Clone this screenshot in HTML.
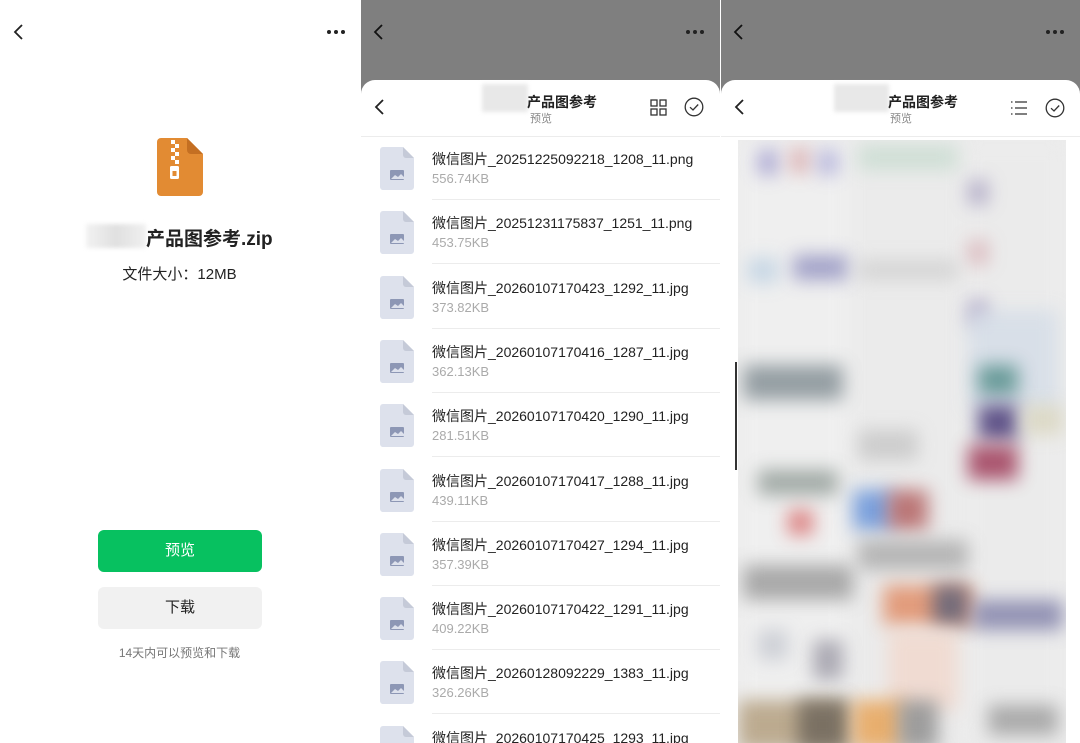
<!DOCTYPE html>
<html><head><meta charset="utf-8"><style>
*{margin:0;padding:0;box-sizing:border-box}
body{width:1080px;height:743px;overflow:hidden;background:#fff;font-family:"Liberation Sans","Noto Sans CJK SC",sans-serif;position:relative}
.p{position:absolute;top:0;height:743px;width:359px;overflow:hidden}
.abs{position:absolute}
.dots{position:absolute;top:30px;display:flex;gap:3px}
.dots i{width:4px;height:4px;border-radius:50%;background:#222;display:block}
.sheet{position:absolute;left:0;top:80px;width:359px;height:700px;background:#fff;border-radius:14px 14px 0 0}
.row{position:absolute;left:0;width:359px;height:64px}
.row .ic{position:absolute;left:19px;top:11px;width:34px;height:43px}
.row .n{position:absolute;left:71px;top:13px;font-size:14px;color:#222}
.row .s{position:absolute;left:71px;top:35px;font-size:13px;color:#aaa}
.row .ln{position:absolute;left:71px;right:0;bottom:0;height:1px;background:#ececec}
.blurbox{position:absolute;left:17px;top:140px;width:328px;height:603px;background:#ebebeb;overflow:hidden}
.bl{position:absolute;filter:blur(9px);opacity:.8}
</style></head><body>

<div class="p" style="left:0;background:#fff">
 <svg class="abs" style="left:12px;top:23px" width="14" height="18" viewBox="0 0 14 18"><path d="M10 2 L3 9 L10 16" stroke="#222" stroke-width="1.8" fill="none"/></svg>
 <div class="dots" style="left:327px"><i></i><i></i><i></i></div>
 <svg class="abs" style="left:157px;top:138px" width="46" height="58" viewBox="0 0 46 58">
  <path d="M4 0 H30 L46 16 V54 a4 4 0 0 1 -4 4 H4 a4 4 0 0 1 -4 -4 V4 a4 4 0 0 1 4 -4z" fill="#e28b33"/>
  <path d="M30 0 L46 16 H34 a4 4 0 0 1 -4 -4z" fill="#c46f22"/>
  <g fill="#fff"><rect x="14" y="2" width="4" height="4"/><rect x="18" y="6" width="4" height="4"/><rect x="14" y="10" width="4" height="4"/><rect x="18" y="14" width="4" height="4"/><rect x="14" y="18" width="4" height="4"/><rect x="18" y="22" width="4" height="4"/></g>
  <rect x="13" y="28" width="9" height="13" rx="1.5" fill="#fff"/><rect x="15.5" y="33" width="4" height="5" fill="#e28b33"/>
 </svg>
 <div class="abs" style="left:86px;top:224px;width:60px;height:24px;background:linear-gradient(90deg,#f2f2f2,#e0e0e0,#f0f0f0);filter:blur(2px)"></div>
 <div class="abs" style="left:146px;top:224px;font-size:19px;color:#222;font-weight:600">产品图参考.zip</div>
 <div class="abs" style="left:0;width:359px;text-align:center;top:263px;font-size:15px;color:#222">文件大小：12MB</div>
 <div class="abs" style="left:98px;top:530px;width:164px;height:42px;background:#07c160;border-radius:6px;color:#fff;font-size:15px;text-align:center;line-height:42px">预览</div>
 <div class="abs" style="left:98px;top:587px;width:164px;height:42px;background:#f1f1f1;border-radius:6px;color:#222;font-size:15px;text-align:center;line-height:42px">下载</div>
 <div class="abs" style="left:0;width:359px;text-align:center;top:644px;font-size:12px;color:#777">14天内可以预览和下载</div>
</div>

<div class="p" style="left:361px;background:#7f7f7f">
 <svg class="abs" style="left:11px;top:23px" width="14" height="18" viewBox="0 0 14 18"><path d="M10 2 L3 9 L10 16" stroke="#111" stroke-width="1.8" fill="none"/></svg>
 <div class="dots" style="left:325px"><i></i><i></i><i></i></div>
 <div class="sheet">
  <svg class="abs" style="left:12px;top:18px" width="14" height="18" viewBox="0 0 14 18"><path d="M10 2 L3 9 L10 16" stroke="#222" stroke-width="1.8" fill="none"/></svg>
  <div class="abs" style="left:121px;top:4px;width:46px;height:28px;background:#e8e8e8;filter:blur(2px)"></div>
  <div class="abs" style="left:166px;top:12px;font-size:14px;color:#222;font-weight:bold">产品图参考</div>
  <div class="abs" style="left:169px;top:30px;font-size:11px;color:#888">预览</div>
  <svg class="abs" style="left:289px;top:19px" width="17" height="17" viewBox="0 0 17 17" fill="none" stroke="#333" stroke-width="1.3"><rect x="1" y="1" width="6" height="6"/><rect x="10" y="1" width="6" height="6"/><rect x="1" y="10" width="6" height="6"/><rect x="10" y="10" width="6" height="6"/></svg>
  <svg class="abs" style="left:323px;top:17px" width="20" height="20" viewBox="0 0 20 20" fill="none" stroke="#333" stroke-width="1.3"><circle cx="10" cy="10" r="8.8"/><path d="M6 10.2 L9 13 L14.2 7.5"/></svg>
  <div class="abs" style="left:0;right:0;top:56px;height:1px;background:#ececec"></div>
 </div>
</div>
<div id="list" class="abs" style="left:361px;top:136px;width:359px;height:607px;overflow:hidden"></div>

<div class="p" style="left:721px;background:#7f7f7f">
 <svg class="abs" style="left:11px;top:23px" width="14" height="18" viewBox="0 0 14 18"><path d="M10 2 L3 9 L10 16" stroke="#111" stroke-width="1.8" fill="none"/></svg>
 <div class="dots" style="left:325px"><i></i><i></i><i></i></div>
 <div class="sheet">
  <svg class="abs" style="left:12px;top:18px" width="14" height="18" viewBox="0 0 14 18"><path d="M10 2 L3 9 L10 16" stroke="#222" stroke-width="1.8" fill="none"/></svg>
  <div class="abs" style="left:113px;top:4px;width:55px;height:28px;background:#e8e8e8;filter:blur(2px)"></div>
  <div class="abs" style="left:167px;top:12px;font-size:14px;color:#222;font-weight:bold">产品图参考</div>
  <div class="abs" style="left:169px;top:30px;font-size:11px;color:#888">预览</div>
  <svg class="abs" style="left:289px;top:20px" width="18" height="16" viewBox="0 0 18 16" fill="none" stroke="#333" stroke-width="1.3"><path d="M1 2h1.5M1 8h1.5M1 14h1.5M5 2h12M5 8h12M5 14h12"/></svg>
  <svg class="abs" style="left:324px;top:18px" width="20" height="20" viewBox="0 0 20 20" fill="none" stroke="#333" stroke-width="1.3"><circle cx="10" cy="10" r="8.8"/><path d="M6 10.2 L9 13 L14.2 7.5"/></svg>
  <div class="abs" style="left:0;right:0;top:56px;height:1px;background:#ececec"></div>
 </div>
 <div class="abs" style="left:0;top:137px;width:359px;height:606px;background:#fff"></div>
 <div class="blurbox">
  <div class="bl" style="left:0;top:0;width:110px;height:600px;background:#f1f1f1"></div>
  <div class="bl" style="left:225px;top:0;width:103px;height:600px;background:#ececec"></div>
  <div class="bl" style="left:20px;top:10px;width:20px;height:25px;background:#9c97cc"></div>
  <div class="bl" style="left:52px;top:8px;width:20px;height:25px;background:#d8a5a8"></div>
  <div class="bl" style="left:80px;top:10px;width:20px;height:25px;background:#a9a8d8"></div>
  <div class="bl" style="left:120px;top:5px;width:100px;height:25px;background:#c8dcd0"></div>
  <div class="bl" style="left:230px;top:40px;width:20px;height:25px;background:#a7a0c0"></div>
  <div class="bl" style="left:230px;top:100px;width:20px;height:25px;background:#d8b0b5"></div>
  <div class="bl" style="left:230px;top:160px;width:20px;height:25px;background:#a59cc0"></div>
  <div class="bl" style="left:10px;top:118px;width:30px;height:25px;background:#bcd0e2"></div>
  <div class="bl" style="left:55px;top:115px;width:55px;height:25px;background:#8f8fbf"></div>
  <div class="bl" style="left:120px;top:120px;width:100px;height:20px;background:#cfcfcf"></div>
  <div class="bl" style="left:230px;top:170px;width:90px;height:100px;background:#d4dde8"></div>
  <div class="bl" style="left:5px;top:225px;width:100px;height:35px;background:#7e8a90"></div>
  <div class="bl" style="left:240px;top:225px;width:40px;height:30px;background:#4e8a86"></div>
  <div class="bl" style="left:240px;top:265px;width:40px;height:35px;background:#3d2e70"></div>
  <div class="bl" style="left:230px;top:305px;width:50px;height:35px;background:#9a3050"></div>
  <div class="bl" style="left:285px;top:265px;width:40px;height:30px;background:#d9d5bd"></div>
  <div class="bl" style="left:120px;top:290px;width:60px;height:30px;background:#c5c5c5"></div>
  <div class="bl" style="left:20px;top:330px;width:80px;height:25px;background:#8e9994"></div>
  <div class="bl" style="left:115px;top:350px;width:40px;height:40px;background:#5f8ed9"></div>
  <div class="bl" style="left:150px;top:350px;width:40px;height:40px;background:#b05a5a"></div>
  <div class="bl" style="left:50px;top:370px;width:25px;height:25px;background:#d86868"></div>
  <div class="bl" style="left:5px;top:425px;width:110px;height:35px;background:#979797"></div>
  <div class="bl" style="left:120px;top:400px;width:110px;height:30px;background:#a8a8a8"></div>
  <div class="bl" style="left:145px;top:445px;width:90px;height:40px;background:#e08860"></div>
  <div class="bl" style="left:195px;top:445px;width:35px;height:40px;background:#58607a"></div>
  <div class="bl" style="left:150px;top:490px;width:70px;height:80px;background:#f2d8cc"></div>
  <div class="bl" style="left:235px;top:460px;width:90px;height:30px;background:#7c7ca6"></div>
  <div class="bl" style="left:20px;top:490px;width:30px;height:30px;background:#c5c8d0"></div>
  <div class="bl" style="left:75px;top:500px;width:30px;height:40px;background:#9a98a4"></div>
  <div class="bl" style="left:0;top:560px;width:110px;height:50px;background:#b09a78"></div>
  <div class="bl" style="left:60px;top:560px;width:50px;height:50px;background:#6a6258"></div>
  <div class="bl" style="left:115px;top:560px;width:50px;height:50px;background:#e8a050"></div>
  <div class="bl" style="left:160px;top:560px;width:40px;height:50px;background:#8a8a8a"></div>
  <div class="bl" style="left:250px;top:565px;width:70px;height:30px;background:#9a9a9a"></div>
 </div>
 <div class="abs" style="left:14px;top:362px;width:2px;height:108px;background:#333"></div>
</div>

<script>
var d=[["20251225092218_1208_11.png","556.74KB"],["20251231175837_1251_11.png","453.75KB"],["20260107170423_1292_11.jpg","373.82KB"],["20260107170416_1287_11.jpg","362.13KB"],["20260107170420_1290_11.jpg","281.51KB"],["20260107170417_1288_11.jpg","439.11KB"],["20260107170427_1294_11.jpg","357.39KB"],["20260107170422_1291_11.jpg","409.22KB"],["20260128092229_1383_11.jpg","326.26KB"],["20260107170425_1293_11.jpg",""]];
var h="",ic='<svg class="ic" viewBox="0 0 34 43"><path d="M3 0H23L34 11V40a3 3 0 0 1-3 3H3a3 3 0 0 1-3-3V3a3 3 0 0 1 3-3z" fill="#dde1ec"/><path d="M23 0L34 11H26a3 3 0 0 1-3-3z" fill="#c5cad8"/><rect x="10" y="23" width="14" height="10" rx="1" fill="#8d97b5"/><path d="M11 32l4-4 3 2 3-3 3 3v2z" fill="#dde1ec"/></svg>';
d.forEach(function(r,i){h+='<div class="row" style="top:'+(i*64.3)+'px">'+ic+'<div class="n">微信图片_'+r[0]+'</div><div class="s">'+r[1]+'</div><div class="ln"></div></div>';});
document.getElementById("list").innerHTML=h;
</script>
</body></html>
